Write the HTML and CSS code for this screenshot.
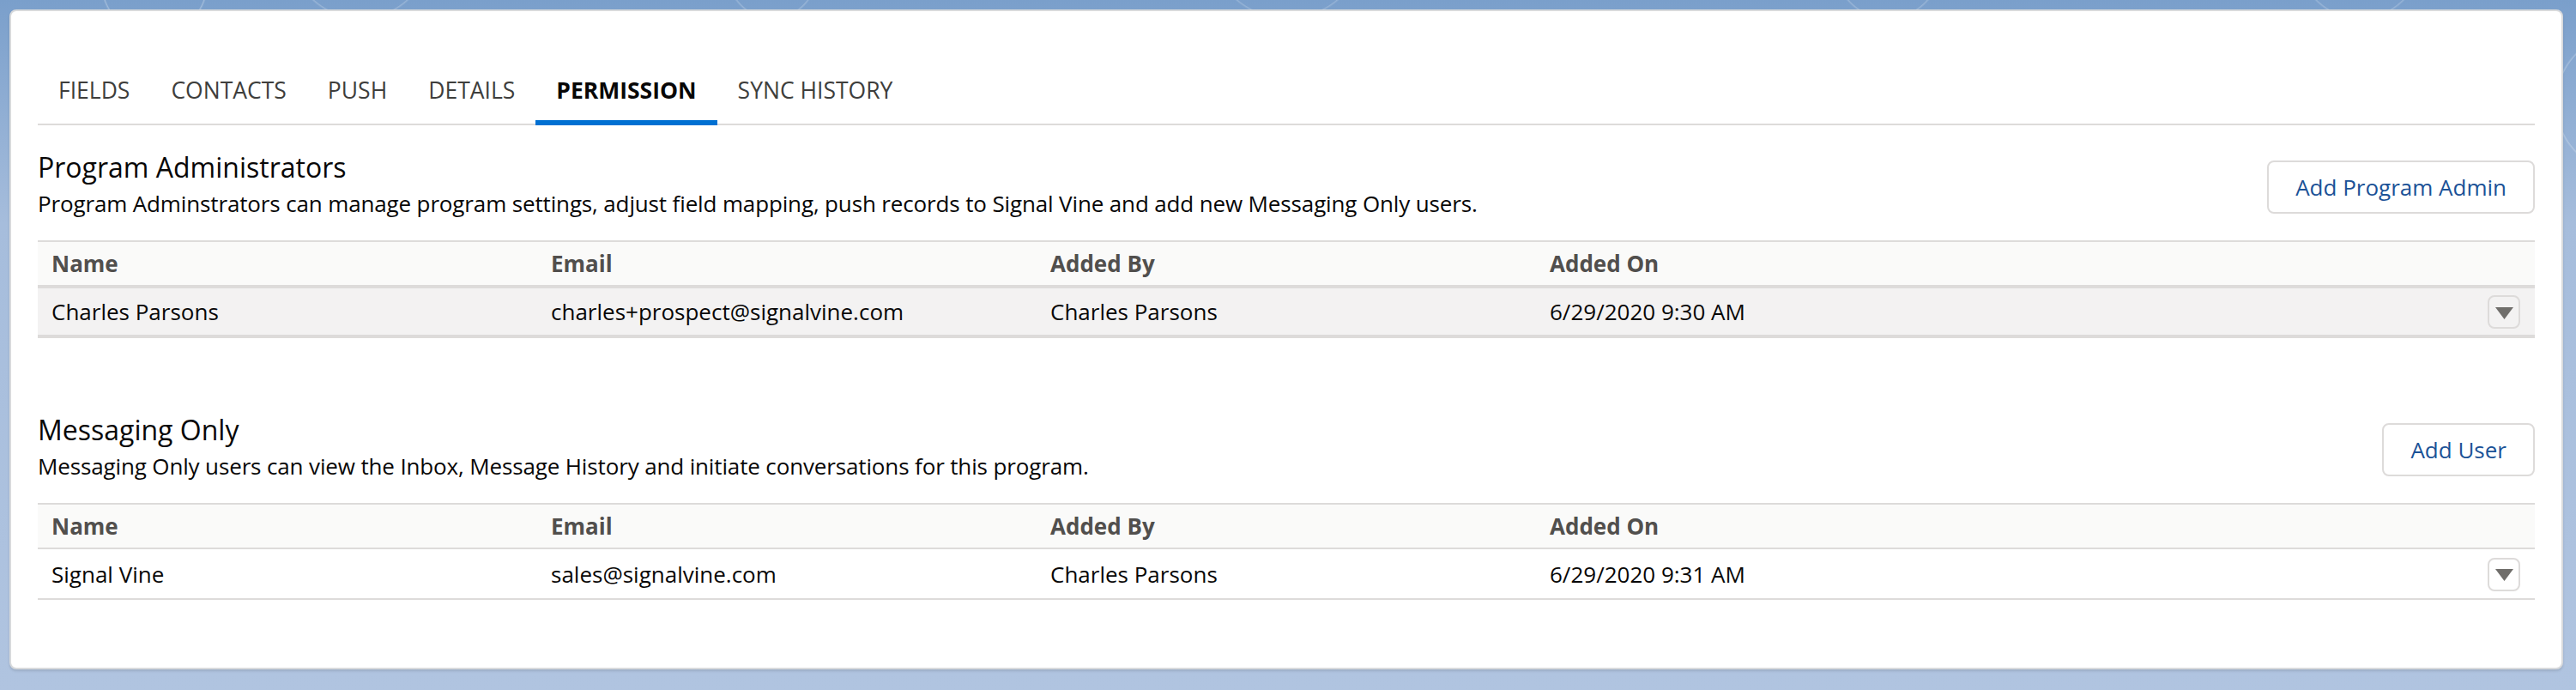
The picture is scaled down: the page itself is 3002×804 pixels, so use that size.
FILE: index.html
```html
<!DOCTYPE html>
<html>

<head>
    <meta charset="UTF-8">
    <title>Program Permissions</title>
    <link rel="stylesheet" href="styles.css">
</head>

<body>
    <div class="card">
        <div class="tabs">
            <div class="tab">FIELDS</div>
            <div class="tab">CONTACTS</div>
            <div class="tab">PUSH</div>
            <div class="tab">DETAILS</div>
            <div class="tab active">PERMISSION</div>
            <div class="tab">SYNC HISTORY</div>
        </div>

        <div class="section">
            <div class="section-head">
                <div>
                    <h2 class="section-title">Program Administrators</h2>
                    <p class="section-desc">Program Adminstrators can manage program settings, adjust field mapping, push records to Signal Vine and add new Messaging Only users.</p>
                </div>
                <button class="btn">Add Program Admin</button>
            </div>
            <table class="grid">
                <thead>
                    <tr>
                        <th>Name</th>
                        <th>Email</th>
                        <th>Added By</th>
                        <th>Added On</th>
                        <th></th>
                    </tr>
                </thead>
                <tbody>
                    <tr class="hovered">
                        <td>Charles Parsons</td>
                        <td>charles+prospect@signalvine.com</td>
                        <td>Charles Parsons</td>
                        <td>6/29/2020 9:30 AM</td>
                        <td class="actions">
                            <button class="menu-btn">
                                <svg width="21" height="14" viewBox="0 0 21 14"><polygon points="0,0 21,0 10.5,14" /></svg>
                            </button>
                        </td>
                    </tr>
                </tbody>
            </table>
        </div>

        <div class="section second">
            <div class="section-head">
                <div>
                    <h2 class="section-title">Messaging Only</h2>
                    <p class="section-desc">Messaging Only users can view the Inbox, Message History and initiate conversations for this program.</p>
                </div>
                <button class="btn">Add User</button>
            </div>
            <table class="grid">
                <thead>
                    <tr>
                        <th>Name</th>
                        <th>Email</th>
                        <th>Added By</th>
                        <th>Added On</th>
                        <th></th>
                    </tr>
                </thead>
                <tbody>
                    <tr>
                        <td>Signal Vine</td>
                        <td>sales@signalvine.com</td>
                        <td>Charles Parsons</td>
                        <td>6/29/2020 9:31 AM</td>
                        <td class="actions">
                            <button class="menu-btn">
                                <svg width="21" height="14" viewBox="0 0 21 14"><polygon points="0,0 21,0 10.5,14" /></svg>
                            </button>
                        </td>
                    </tr>
                </tbody>
            </table>
        </div>
    </div>
</body>

</html>
```

FILE: styles.css
```css
html,
body {
    margin: 0;
    padding: 0;
}

body {
    font-family: "Open Sans", "Liberation Sans", sans-serif;
    color: #080707;
    padding: 11px 15px 24px 11px;
    background:
        radial-gradient(circle at 180px -20px, transparent 60px, rgba(255, 255, 255, .28) 61px, transparent 63px),
        radial-gradient(circle at 420px -60px, transparent 80px, rgba(255, 255, 255, .22) 81px, transparent 83px),
        radial-gradient(circle at 900px -30px, transparent 50px, rgba(255, 255, 255, .22) 51px, transparent 53px),
        radial-gradient(circle at 1500px -70px, transparent 90px, rgba(255, 255, 255, .2) 91px, transparent 93px),
        radial-gradient(circle at 2200px -40px, transparent 60px, rgba(255, 255, 255, .22) 61px, transparent 63px),
        radial-gradient(circle at 2750px -50px, transparent 70px, rgba(255, 255, 255, .22) 71px, transparent 73px),
        radial-gradient(circle at 3060px 120px, transparent 80px, rgba(255, 255, 255, .25) 81px, transparent 83px),
        linear-gradient(to bottom, #7a9fcb 0, #a6bddc 260px, #b0c4e0 100%);
    background-repeat: no-repeat;
    min-height: 769px;
}

.card {
    background: #fff;
    border: 2px solid #d8dadc;
    border-radius: 8px;
    box-shadow: 0 2px 3px rgba(0, 0, 0, .12);
    padding: 53px 31px 79px 31px;
}

/* tabs */

.tabs {
    display: flex;
    align-items: flex-start;
    border-bottom: 2px solid #dddbda;
}

.tab {
    height: 78px;
    line-height: 78px;
    padding: 0 24px;
    font-size: 26.5px;
    color: #3e3e3c;
    box-sizing: border-box;
}

.tab.active {
    height: 80px;
    margin-bottom: -2px;
    color: #080707;
    font-weight: 700;
    box-shadow: inset 0 -6px 0 #0070d2;
}

/* sections */

.section {
    margin-top: 29px;
}

.section.second {
    margin-top: 87px;
}

.section-head {
    display: flex;
    justify-content: space-between;
    align-items: center;
}

.section-title {
    margin: 0;
    font-size: 32px;
    line-height: 40px;
    font-weight: 400;
}

.section-desc {
    margin: 4px 0 0 0;
    font-size: 26px;
    line-height: 36px;
    letter-spacing: -0.14px;
}

.btn {
    margin-top: 6px;
    height: 62px;
    box-sizing: border-box;
    padding: 0 31px;
    border: 2px solid #dddbda;
    border-radius: 8px;
    background: #fff;
    color: #1b5297;
    font-family: inherit;
    font-size: 26px;
}

/* tables */

.grid {
    width: 100%;
    table-layout: fixed;
    border-collapse: separate;
    border-spacing: 0;
    margin-top: 25px;
}

.grid th {
    height: 50px;
    padding: 0 16px;
    text-align: left;
    font-size: 26px;
    font-weight: 700;
    color: #514f4d;
    background: #fafaf9;
    border-top: 2px solid #dddbda;
    border-bottom: 2px solid #dddbda;
}

.grid td {
    height: 57px;
    padding: 0 16px;
    font-size: 26px;
    border-bottom: 2px solid #dddbda;
    white-space: nowrap;
}

.grid tr.hovered td {
    height: 58px;
    background: #f3f2f2;
    box-shadow: inset 0 2px 0 #dddbda, inset 0 -2px 0 #dddbda;
}

.grid td.actions {
    text-align: right;
    padding-right: 17px;
}

.menu-btn {
    width: 38px;
    height: 39px;
    padding: 0;
    box-sizing: border-box;
    border: 2px solid #dddbda;
    border-radius: 8px;
    background: transparent;
    display: inline-flex;
    align-items: center;
    justify-content: center;
    vertical-align: middle;
}

.menu-btn svg {
    fill: #706e6b;
    margin-top: 2px;
}
```
